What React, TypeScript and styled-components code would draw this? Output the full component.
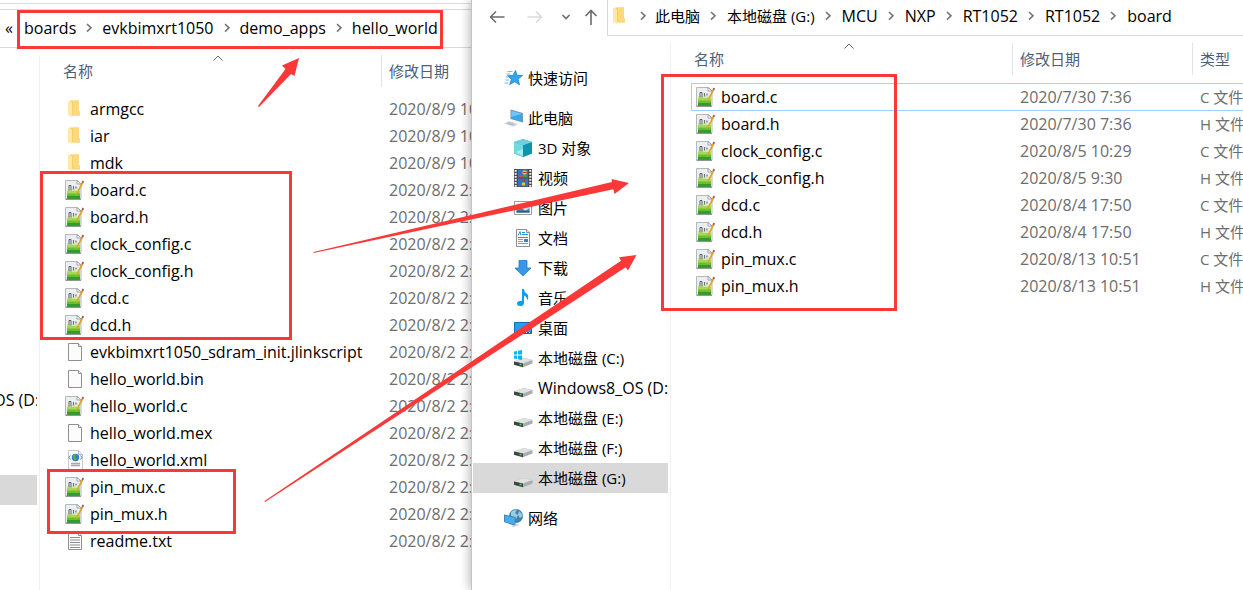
import React from "react";
import styled, { createGlobalStyle } from "styled-components";

const GlobalStyle = createGlobalStyle`
  *, *::before, *::after { box-sizing: border-box; }
  body {
    margin: 0;
    background: #fff;
    color: #000;
    font-family: "Open Sans", "Noto Sans CJK SC", sans-serif;
    font-size: 15px;
    line-height: 20px;
  }
`;

const RED = "#fb3838";

/* ---------- layout ---------- */

const Desktop = styled.main`
  position: relative;
  display: grid;
  grid-template-columns: 472px minmax(0, 1fr);
  min-height: 100vh;
  overflow: hidden;
`;

const ExplorerWindow = styled.section<{ $raised?: boolean }>`
  display: flex;
  flex-direction: column;
  min-width: 0;
  background: #fff;
  overflow: ${(p) => (p.$raised ? "visible" : "hidden")};
  box-shadow: ${(p) => (p.$raised ? "-1px 0 0 #c4c4c4, -2px 0 10px rgba(0, 0, 0, 0.3)" : "none")};
  z-index: ${(p) => (p.$raised ? 1 : 0)};
`;

const WindowBody = styled.div`
  display: flex;
  flex: 1;
  min-height: 0;
`;

const RibbonEdge = styled.div`
  height: 4px;
  border-bottom: 1px solid #dcdcdc;
  margin-bottom: 5px;
`;

const BackAddressBar = styled.nav`
  display: flex;
  align-items: center;
  height: 39px;
  padding: 0 0 2px 5px;
  border-top: 1px solid #d9d9d9;
  border-bottom: 1px solid #d9d9d9;
`;

const Toolbar = styled.header`
  display: flex;
  height: 36px;
`;

const HistoryButtons = styled.div`
  display: flex;
  align-items: center;
  width: 135px;
  padding: 0 0 2px 10px;
`;

const ToolButton = styled.button<{ $width: number }>`
  display: flex;
  align-items: center;
  justify-content: center;
  width: ${(p) => p.$width}px;
  height: 24px;
  padding: 0;
  border: 0;
  background: none;
`;

const AddressBar = styled.nav`
  display: flex;
  flex: 1;
  align-items: center;
  min-width: 0;
  padding: 0 0 3px 2px;
  border-left: 1px solid #d9d9d9;
  border-bottom: 1px solid #d9d9d9;
`;

const Crumbs = styled.ol<{ $gap: number }>`
  display: flex;
  align-items: center;
  gap: ${(p) => p.$gap}px;
  margin: 0;
  padding: 0;
  list-style: none;
  white-space: nowrap;
`;

const Crumb = styled.li`
  display: flex;
  align-items: center;
  gap: 8px;
`;

const CrumbLink = styled.a<{ $latin: boolean }>`
  color: #000;
  font-size: ${(p) => (p.$latin ? 16 : 15)}px;
  text-decoration: none;
`;

const RootMark = styled.span`
  display: flex;
  align-items: center;
  gap: 8px;
  margin-right: 7px;
`;

const Overflow = styled.span`
  width: 19px;
  font-size: 16px;
`;

/* ---------- navigation pane ---------- */

const NavPane = styled.nav<{ $width: number; $top: number }>`
  flex: none;
  width: ${(p) => p.$width}px;
  padding: ${(p) => p.$top}px 2px 0 0;
`;

const NavGroup = styled.ul`
  margin: 0 0 10px;
  padding: 0;
  list-style: none;
`;

const NavItem = styled.li<{ $indent?: number; $selected?: boolean; $latin?: boolean }>`
  display: flex;
  align-items: center;
  gap: 4px;
  height: 30px;
  margin-left: 1px;
  padding-left: ${(p) => p.$indent ?? 0}px;
  overflow: hidden;
  font-size: ${(p) => (p.$latin ? 16 : 15)}px;
  white-space: nowrap;
  background: ${(p) => (p.$selected ? "#d9d9d9" : "transparent")};
`;

const ClippedNavItem = styled.li<{ $selected?: boolean }>`
  display: flex;
  align-items: center;
  justify-content: center;
  height: 30px;
  margin-bottom: 60px;
  overflow: hidden;
  font-size: 16px;
  white-space: nowrap;
  background: ${(p) => (p.$selected ? "#d9d9d9" : "transparent")};
`;

/* ---------- file list ---------- */

const ListPane = styled.div<{ $top: number }>`
  flex: 1;
  min-width: 0;
  margin-top: ${(p) => p.$top}px;
  padding-left: 15px;
  border-left: 1px solid #f0f0f0;
  overflow: hidden;
`;

const FileTable = styled.table`
  width: 100%;
  border-collapse: collapse;
  table-layout: fixed;
  white-space: nowrap;
`;

const HeadCell = styled.th<{ $width?: number }>`
  width: ${(p) => (p.$width ? p.$width + "px" : "auto")};
  height: 40px;
  padding: 0;
  color: #4c607a;
  font-weight: 400;
  text-align: left;
  vertical-align: top;
`;

const HeadLabel = styled.div<{ $divided?: boolean }>`
  position: relative;
  display: flex;
  align-items: center;
  height: 32px;
  padding-left: ${(p) => (p.$divided ? 7 : 8)}px;
  border-left: ${(p) => (p.$divided ? "1px solid #e3e3e3" : "0")};
`;

const SortMark = styled.svg`
  position: absolute;
  top: 0;
  left: calc(50% - 5px);
`;

const Cell = styled.td`
  padding: 0;
`;

const CellBox = styled.div<{ $focused?: boolean; $cjk?: boolean }>`
  display: flex;
  align-items: center;
  height: 27px;
  padding-left: 8px;
  border-top: 1px solid ${(p) => (p.$focused ? "#99d1ff" : "transparent")};
  box-shadow: ${(p) => (p.$focused ? "0 1px 0 #99d1ff" : "none")};
  color: #6d6d6d;
  font-size: ${(p) => (p.$cjk ? 15 : 16)}px;
`;

const NameBox = styled(CellBox)`
  gap: 5px;
  margin-left: 5px;
  padding-left: 4px;
  border-left: 1px solid ${(p) => (p.$focused ? "#99d1ff" : "transparent")};
  color: #000;
`;

/* ---------- annotations ---------- */

const Frame = styled.div<{ $x: number; $y: number; $w: number; $h: number }>`
  position: absolute;
  z-index: 3;
  left: ${(p) => p.$x}px;
  top: ${(p) => p.$y}px;
  width: ${(p) => p.$w}px;
  height: ${(p) => p.$h}px;
  border: 3px solid ${RED};
  pointer-events: none;
`;

const Arrows = styled.svg`
  position: absolute;
  z-index: 3;
  top: 0;
  left: 0;
  pointer-events: none;
`;

/* ---------- icons ---------- */

const Icon = styled.svg.attrs({ width: 20, height: 20, viewBox: "0 0 20 20", "aria-hidden": true })`
  flex: none;
`;

const Chevron = () => (
  <svg width="10" height="12" viewBox="0 0 10 12" aria-hidden="true">
    <path d="M3 2l4 3.8-4 3.8" fill="none" stroke="#767676" strokeWidth="1.6" />
  </svg>
);

const FolderIcon = () => (
  <Icon>
    <path d="M5 1.500h9v11h1v4H6z" fill="#f5cf6a" />
    <path d="M8 1.500h6v11l1 .3v3.700H8z" fill="#fbd97c" />
    <path d="M3 1.500l4 2v14.500l-4-2z" fill="#ffe8a6" />
  </Icon>
);

const SourceIcon = () => (
  <Icon>
    <path d="M.5.500h11.500l4 3.500v15H.5z" fill="#eceff2" stroke="#b4b8bc" />
    <path d="M12 .5v3.500h4z" fill="#fff" stroke="#8d9297" strokeWidth=".8" />
    <path d="M2 9q6 1.500 13-1v5H2z" fill="#cfe9a0" />
    <path d="M2 11h13v3H2z" fill="#a3d956" />
    <path d="M2 13.500h13V16H2z" fill="#66c02e" />
    <path d="M2 16h13v3H2z" fill="#2f9d2b" />
    <path d="M.5 19.300h15.500" stroke="#7d8880" />
    <path d="M4 10.500V5.500h2v5" fill="none" stroke="#59625f" />
    <path d="M8.500 6v3.500M11 6.500v2" fill="none" stroke="#6b7471" strokeWidth="1.200" />
    <path d="M16.500 2.500l1.700 1-6.200 11-1.700 1z" fill="#e2a224" />
    <path d="M16.500 2.500l1-1.900 1.500.8-.8 2.100z" fill="#94556b" />
  </Icon>
);

const PageIcon = ({ children }: { children?: React.ReactNode }) => (
  <Icon>
    <path d="M3.500 1.500h10l3 3v14h-13z" fill="#fcfcfc" stroke="#8f8f8f" />
    <path d="M13.500 1.500v3h3" fill="#eee" stroke="#8f8f8f" />
    {children}
  </Icon>
);

const TextIcon = () => (
  <PageIcon>
    <path d="M5 6.500h10M5 9h10M5 11.500h10M5 14h10M5 16.500h10" stroke="#8b8b8b" />
  </PageIcon>
);

const XmlIcon = () => (
  <Icon>
    <path d="M3.500.5h10l4 4v15h-14z" fill="#fafbfd" stroke="#c6c9ce" />
    <path d="M13.500.5v4h4" fill="#e8ebf0" stroke="#b5bac2" />
    <circle cx="10.500" cy="7.500" r="3.700" fill="#2d7fd0" />
    <path d="M8 5.500q2-2 3.500-.8L10 7l1.500 1-1 2.500q-2-.5-2-2.500z" fill="#54b545" />
    <path d="M5.500 5.500L4 7.500l1.500 2M15.500 5.500l1.500 2-1.500 2" fill="none" stroke="#6d7f98" />
    <path d="M6 13.500h9M6 15.500h9" stroke="#a6a3bb" strokeWidth="1.500" />
  </Icon>
);

const StarIcon = () => (
  <Icon>
    <path d="M11.500 2.500l1.500 4.800 5.500.2-4.400 3.600 1.400 5.600-4.800-3-5 2.800 1.700-5.300L3.500 7.700l5.500-.2z" fill="#2fa8ef" stroke="#1b7fc9" strokeWidth=".8" />
    <path d="M3.500 3.500h5M2.500 6h4M2 9h2.500M1.500 12h3.500M.5 15h3.500" stroke="#6cc0f2" />
  </Icon>
);

const ComputerIcon = () => (
  <Icon>
    <path d="M6.500 1.500l12.500 3.500v9.500l-12.500-3.500z" fill="#7c93a6" />
    <path d="M7.300 2.700L18 5.700v7.700L7.300 10.400z" fill="#37a6ec" />
    <path d="M7.300 2.700L18 5.700 7.300 9z" fill="#6ec5f7" />
    <path d="M0 15.500l5-2.500 9 3-4 2.700z" fill="#d3d8dd" />
    <path d="M2 15.500l3-1.400 6 2-3 1.400z" fill="#b8bfc5" />
  </Icon>
);

const CubeIcon = () => (
  <Icon>
    <path d="M9 1l9 3v11.500L9 19l-9-3.500V4z" fill="#2bb3c6" />
    <path d="M0 4l9 3v12l-9-3.500z" fill="#74d8e2" />
    <path d="M9 7l9-3v11.500L9 19z" fill="#1094ae" />
    <path d="M0 4l9-3 9 3-9 3.200z" fill="#6fcfdd" />
    <path d="M2 14l7-3v7z" fill="#a8ece9" />
  </Icon>
);

const VideoIcon = () => (
  <Icon>
    <path d="M0 1h18v18H0z" fill="#4c4c4c" />
    <path d="M4 1.500h10V9.500H4zM4 10.500h10v8H4z" fill="#3672c4" />
    <path d="M1.700 2v17M16.300 2v17" stroke="#f3f3f3" strokeWidth="2" strokeDasharray="1.700 1.300" />
    <circle cx="10.500" cy="4.500" r="2.300" fill="#e8c12b" />
    <path d="M8.500 4.500h4" stroke="#c8362b" />
    <path d="M5 7.500h3l1.500 1.500H5z" fill="#d94a3a" />
    <path d="M9 7h4v2H9z" fill="#3f9c48" />
    <circle cx="9.500" cy="16" r="1.800" fill="#e8c12b" />
    <path d="M7 11.500h5l-2 2z" fill="#c8362b" />
  </Icon>
);

const PictureIcon = () => (
  <Icon>
    <path d="M.5 3.500h17v13H.5z" fill="#fff" stroke="#9a9a9a" />
    <path d="M2.500 5.500h13v9h-13z" fill="#bcdcf2" />
    <path d="M2.500 10.500q3-4 6 0t7-.5v4.500h-13z" fill="#4a7fa8" />
    <path d="M2.500 13h13v1.500h-13z" fill="#2c5c86" />
  </Icon>
);

const DocumentIcon = () => (
  <Icon>
    <path d="M2.500 1.500h10l3 3v14h-13z" fill="#fdfdfd" stroke="#8f8f8f" />
    <path d="M12.500 1.500v3h3" fill="#eee" stroke="#8f8f8f" />
    <path d="M4 7.500l2-4 1 4M8 4.500h3M8 6.500h6M4 9.500h10" fill="none" stroke="#1d97dc" />
    <path d="M10 11h4v3h-4z" fill="#2f83c6" />
    <path d="M4 11.500h5M4 13.500h5M4 15.500h10" stroke="#9a9a9a" />
  </Icon>
);

const DownloadIcon = () => (
  <Icon>
    <path d="M5 2.500h8V10h4L9 18 1 10h4z" fill="#3a96e8" stroke="#2678c8" strokeWidth=".8" />
  </Icon>
);

const MusicIcon = () => (
  <Icon>
    <path d="M8 1h2q0 3 2.500 4.500T14 11l-1 1q0-3.500-3-4.500v7.500q0 3-3.500 3T3 15.500q.3-3 5-2.800z" fill="#0f9bf2" />
  </Icon>
);

const DesktopIcon = () => (
  <Icon>
    <path d="M.5 4.500h17v11H.5z" fill="#1ea0f4" stroke="#0d6fb8" />
    <path d="M1 14h16v2H1z" fill="#0b66ab" />
    <path d="M2 14.500h2M12 14.500h1M15 14.500h1" stroke="#d9efff" />
  </Icon>
);

const DriveIcon = ({ system }: { system?: boolean }) => (
  <Icon>
    <path d="M0 13.500L9.500 10l9 2v3.500L9 19.300l-9-2.500z" fill="#a9adb0" />
    <path d="M0 13.500L9.500 10l9 2L9 15.500z" fill="#dfe1e2" />
    <path d="M0 13.500l9 2v3.800l-9-2.500z" fill="#3f4344" />
    <path d="M5.500 16.300l2 .5" stroke="#3ede4b" strokeWidth="1.500" />
    {system && (
      <path d="M-.5 3.500L3 3v3.500h-3.500zM4 2.800L8 2v4.500H4zM-.5 7.500H3V11l-3.500-.5zM4 7.500h4V12l-4-.800z" fill="#0bb5ee" />
    )}
  </Icon>
);

const NetworkIcon = () => (
  <Icon>
    <circle cx="12" cy="8" r="7" fill="#3f83b0" />
    <path d="M7 4q3-3 6-2.500L11 5l3 2-2 4-5-3zM15 3q3 2 3.500 5L16 10l-2-3z" fill="#9accdf" />
    <path d="M0 6.500L11.500 9v9L0 14z" fill="#56788f" />
    <path d="M.8 7.600l10 2.200v7l-10-3.400z" fill="#3fb0f4" />
    <path d="M7 18l7-2 1 1-6 2z" fill="#c3cbd2" />
  </Icon>
);

/* ---------- data ---------- */

type Kind = "folder" | "source" | "page" | "text" | "xml";
type FileEntry = { name: string; date: string; kind: Kind; type?: string };

const fileIcons: Record<Kind, () => React.ReactElement> = {
  folder: FolderIcon,
  source: SourceIcon,
  page: () => <PageIcon />,
  text: TextIcon,
  xml: XmlIcon,
};

const demoFiles: FileEntry[] = [
  { name: "armgcc", date: "2020/8/9 10", kind: "folder" },
  { name: "iar", date: "2020/8/9 10", kind: "folder" },
  { name: "mdk", date: "2020/8/9 10", kind: "folder" },
  { name: "board.c", date: "2020/8/2 2:", kind: "source" },
  { name: "board.h", date: "2020/8/2 2:", kind: "source" },
  { name: "clock_config.c", date: "2020/8/2 2:", kind: "source" },
  { name: "clock_config.h", date: "2020/8/2 2:", kind: "source" },
  { name: "dcd.c", date: "2020/8/2 2:", kind: "source" },
  { name: "dcd.h", date: "2020/8/2 2:", kind: "source" },
  { name: "evkbimxrt1050_sdram_init.jlinkscript", date: "2020/8/2 2:", kind: "page" },
  { name: "hello_world.bin", date: "2020/8/2 2:", kind: "page" },
  { name: "hello_world.c", date: "2020/8/2 2:", kind: "source" },
  { name: "hello_world.mex", date: "2020/8/2 2:", kind: "page" },
  { name: "hello_world.xml", date: "2020/8/2 2:", kind: "xml" },
  { name: "pin_mux.c", date: "2020/8/2 2:", kind: "source" },
  { name: "pin_mux.h", date: "2020/8/2 2:", kind: "source" },
  { name: "readme.txt", date: "2020/8/2 2:", kind: "text" },
];

const boardFiles: FileEntry[] = [
  { name: "board.c", date: "2020/7/30 7:36", kind: "source", type: "C 文件" },
  { name: "board.h", date: "2020/7/30 7:36", kind: "source", type: "H 文件" },
  { name: "clock_config.c", date: "2020/8/5 10:29", kind: "source", type: "C 文件" },
  { name: "clock_config.h", date: "2020/8/5 9:30", kind: "source", type: "H 文件" },
  { name: "dcd.c", date: "2020/8/4 17:50", kind: "source", type: "C 文件" },
  { name: "dcd.h", date: "2020/8/4 17:50", kind: "source", type: "H 文件" },
  { name: "pin_mux.c", date: "2020/8/13 10:51", kind: "source", type: "C 文件" },
  { name: "pin_mux.h", date: "2020/8/13 10:51", kind: "source", type: "H 文件" },
];

const places: { label: string; icon: React.ReactNode; selected?: boolean }[] = [
  { label: "3D 对象", icon: <CubeIcon /> },
  { label: "视频", icon: <VideoIcon /> },
  { label: "图片", icon: <PictureIcon /> },
  { label: "文档", icon: <DocumentIcon /> },
  { label: "下载", icon: <DownloadIcon /> },
  { label: "音乐", icon: <MusicIcon /> },
  { label: "桌面", icon: <DesktopIcon /> },
  { label: "本地磁盘 (C:)", icon: <DriveIcon system /> },
  { label: "Windows8_OS (D:)", icon: <DriveIcon /> },
  { label: "本地磁盘 (E:)", icon: <DriveIcon /> },
  { label: "本地磁盘 (F:)", icon: <DriveIcon /> },
  { label: "本地磁盘 (G:)", icon: <DriveIcon />, selected: true },
];

const isLatin = (text: string) => /^[\x20-\x7e]+$/.test(text);

/* ---------- composed parts ---------- */

const Breadcrumb = ({ items, gap = 8 }: { items: string[]; gap?: number }) => (
  <Crumbs $gap={gap}>
    {items.map((item, i) => (
      <Crumb key={i}>
        <CrumbLink href="#" $latin={isLatin(item)}>
          {item}
        </CrumbLink>
        {i < items.length - 1 && <Chevron />}
      </Crumb>
    ))}
  </Crumbs>
);

const FileList = ({ files, showType, focused }: { files: FileEntry[]; showType?: boolean; focused?: number }) => (
  <FileTable>
    <thead>
      <tr>
        <HeadCell $width={326}>
          <HeadLabel>
            名称
            <SortMark width="10" height="7" viewBox="0 0 10 7" aria-hidden="true">
              <path d="M.5 5.500L5 1l4.500 4.500" fill="none" stroke="#6a6a6a" />
            </SortMark>
          </HeadLabel>
        </HeadCell>
        <HeadCell $width={showType ? 180 : undefined}>
          <HeadLabel $divided>修改日期</HeadLabel>
        </HeadCell>
        {showType && (
          <HeadCell>
            <HeadLabel $divided>类型</HeadLabel>
          </HeadCell>
        )}
      </tr>
    </thead>
    <tbody>
      {files.map((file, i) => {
        const FileIcon = fileIcons[file.kind];
        const isFocused = i === focused;
        return (
          <tr key={file.name}>
            <Cell>
              <NameBox $focused={isFocused}>
                <FileIcon />
                {file.name}
              </NameBox>
            </Cell>
            <Cell>
              <CellBox $focused={isFocused}>{file.date}</CellBox>
            </Cell>
            {showType && (
              <Cell>
                <CellBox $focused={isFocused} $cjk>
                  {file.type}
                </CellBox>
              </Cell>
            )}
          </tr>
        );
      })}
    </tbody>
  </FileTable>
);

export default function App() {
  return (
    <Desktop>
      <GlobalStyle />

      <ExplorerWindow>
        <RibbonEdge />
        <BackAddressBar aria-label="hello_world">
          <Overflow>«</Overflow>
          <Breadcrumb items={["boards", "evkbimxrt1050", "demo_apps", "hello_world"]} />
        </BackAddressBar>
        <WindowBody>
          <NavPane $width={39} $top={337}>
            <NavGroup>
              <ClippedNavItem>OS (D:)</ClippedNavItem>
              <ClippedNavItem $selected />
            </NavGroup>
          </NavPane>
          <ListPane $top={7}>
            <FileList files={demoFiles} />
          </ListPane>
        </WindowBody>
      </ExplorerWindow>

      <ExplorerWindow $raised>
        <Toolbar>
          <HistoryButtons>
            <ToolButton $width={30} aria-label="后退">
              <svg width="16" height="14" viewBox="0 0 16 14">
                <path d="M15.500 7H1.500M7 1.500L1.500 7 7 12.500" fill="none" stroke="#6b6b6b" strokeWidth="1.500" />
              </svg>
            </ToolButton>
            <ToolButton $width={46} aria-label="前进" disabled>
              <svg width="16" height="14" viewBox="0 0 16 14">
                <path d="M.5 7h14M9 1.500L14.500 7 9 12.500" fill="none" stroke="#dadada" strokeWidth="1.500" />
              </svg>
            </ToolButton>
            <ToolButton $width={16} aria-label="最近浏览的位置">
              <svg width="10" height="8" viewBox="0 0 10 8">
                <path d="M1.500 2L5 5.500 8.500 2" fill="none" stroke="#6b6b6b" strokeWidth="1.600" />
              </svg>
            </ToolButton>
            <ToolButton $width={33} aria-label="上移">
              <svg width="14" height="16" viewBox="0 0 14 16">
                <path d="M7 16V1.500M1.500 7L7 1.500 12.500 7" fill="none" stroke="#6b6b6b" strokeWidth="1.600" />
              </svg>
            </ToolButton>
          </HistoryButtons>
          <AddressBar aria-label="board">
            <RootMark>
              <FolderIcon />
              <Chevron />
            </RootMark>
            <Breadcrumb gap={9} items={["此电脑", "本地磁盘 (G:)", "MCU", "NXP", "RT1052", "RT1052", "board"]} />
          </AddressBar>
        </Toolbar>
        <WindowBody>
          <NavPane $width={198} $top={27}>
            <NavGroup>
              <NavItem $indent={31}>
                <StarIcon />
                快速访问
              </NavItem>
            </NavGroup>
            <NavGroup>
              <NavItem $indent={31}>
                <ComputerIcon />
                此电脑
              </NavItem>
              {places.map((place) => (
                <NavItem key={place.label} $indent={41} $selected={place.selected} $latin={isLatin(place.label)}>
                  {place.icon}
                  {place.label}
                </NavItem>
              ))}
            </NavGroup>
            <NavGroup>
              <NavItem $indent={31}>
                <NetworkIcon />
                网络
              </NavItem>
            </NavGroup>
          </NavPane>
          <ListPane $top={7}>
            <FileList files={boardFiles} showType focused={0} />
          </ListPane>
        </WindowBody>
      </ExplorerWindow>

      <Frame $x={17} $y={10} $w={426} $h={39} />
      <Frame $x={40} $y={171} $w={252} $h={169} />
      <Frame $x={47} $y={469} $w={189} $h={65} />
      <Frame $x={661} $y={74} $w={236} $h={237} />
      <Arrows width="660" height="520" viewBox="0 0 660 520" aria-hidden="true">
        <g fill={RED}>
          <path d="M258 106L285.500 69l-3.500-3.500L299 58l-4.500 18-3.500-2-32 33z" />
          <path d="M313.500 252L612 182l-.5-3L629 183l-14.500 11-1.200-4.700L313.500 253z" />
          <path d="M264.500 501L621 260.700l-2-3.500L636.500 255l-8.500 15.500-2.300-3.200L265 502z" />
        </g>
      </Arrows>
    </Desktop>
  );
}
